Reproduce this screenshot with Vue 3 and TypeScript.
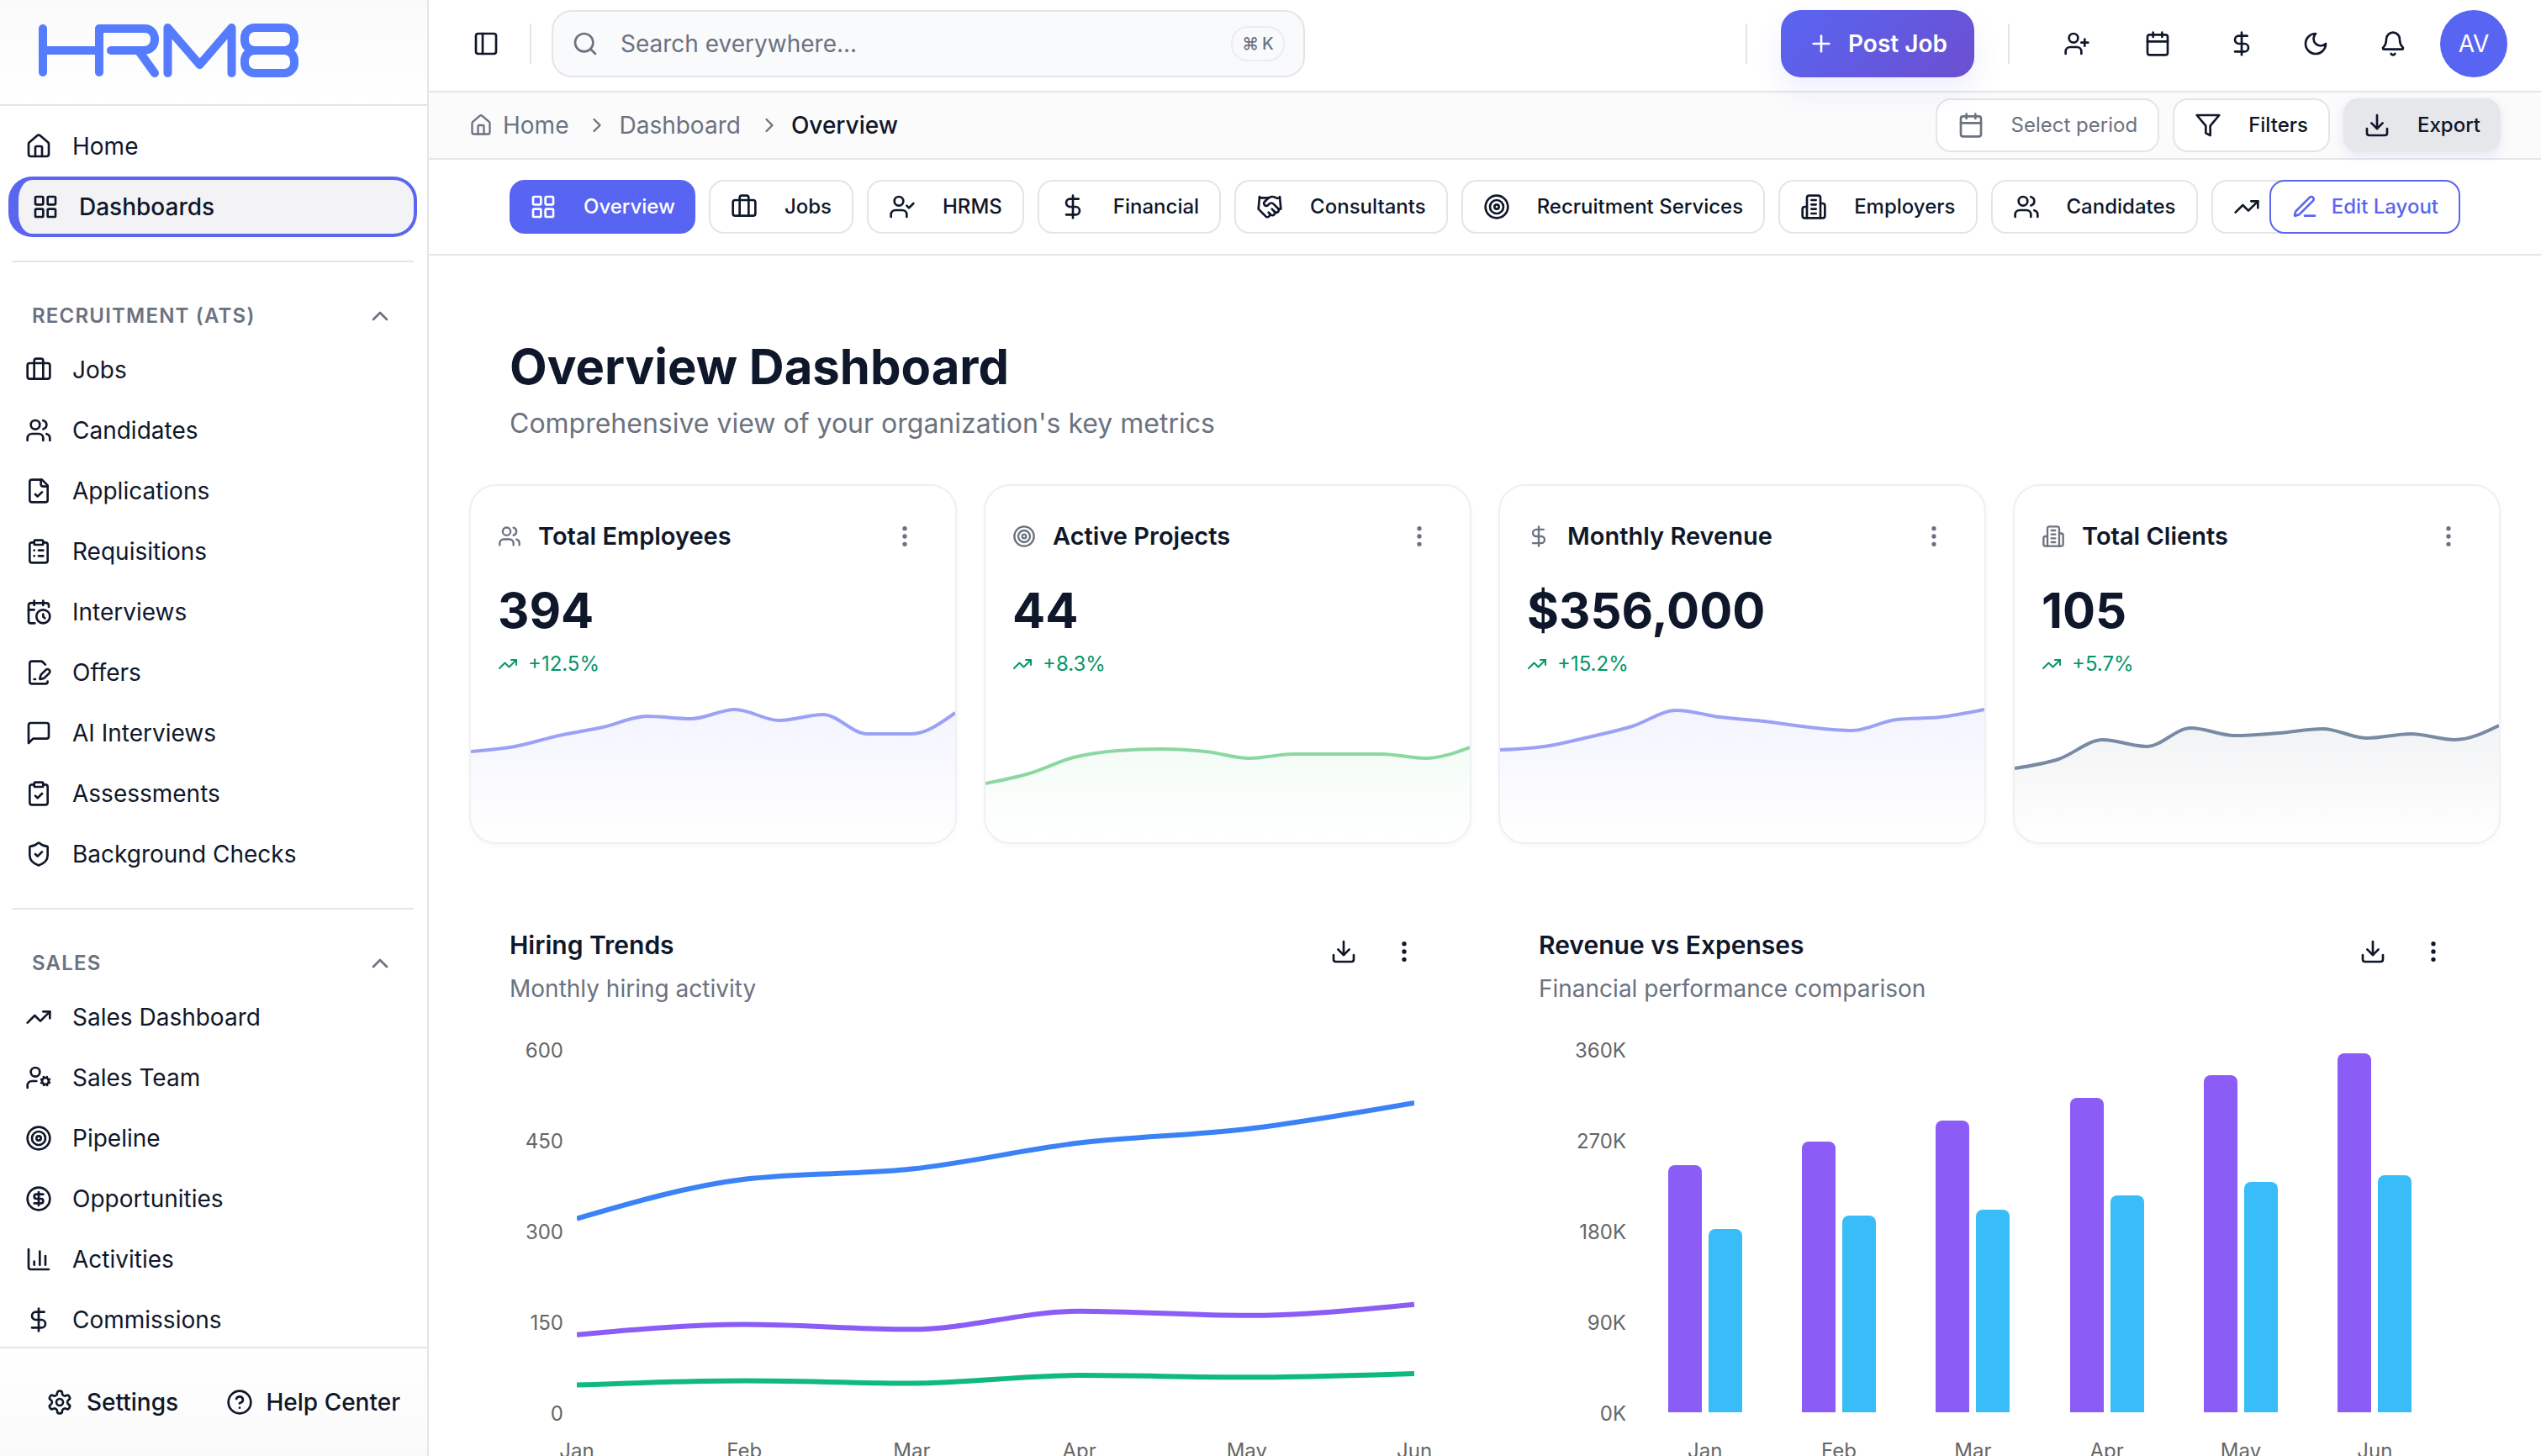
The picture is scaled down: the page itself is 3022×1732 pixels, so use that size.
<script setup lang="ts">
import { h, type FunctionalComponent } from 'vue'

const circle = (x: number, y: number, r: number): string =>
  `M${x - r} ${y}a${r} ${r} 0 1 0 ${2 * r} 0a${r} ${r} 0 1 0 ${-2 * r} 0z`
const box = (x: number, y: number, w: number, ht: number, r: number): string =>
  `M${x + r} ${y}h${w - 2 * r}a${r} ${r} 0 0 1 ${r} ${r}v${ht - 2 * r}a${r} ${r} 0 0 1 ${-r} ${r}h${-(w - 2 * r)}a${r} ${r} 0 0 1 ${-r} ${-r}v${-(ht - 2 * r)}a${r} ${r} 0 0 1 ${r} ${-r}z`

const userBody = ['M16 21v-2a4 4 0 0 0-4-4H6a4 4 0 0 0-4 4v2', circle(9, 7, 4)]
const clipboard = [
  box(8, 2, 8, 4, 1),
  'M16 4h2a2 2 0 0 1 2 2v14a2 2 0 0 1-2 2H6a2 2 0 0 1-2-2V6a2 2 0 0 1 2-2h2',
]

const icons: Record<string, string[]> = {
  home: [
    'M15 21v-8a1 1 0 0 0-1-1h-4a1 1 0 0 0-1 1v8',
    'M3 10a2 2 0 0 1 .709-1.528l7-5.999a2 2 0 0 1 2.582 0l7 5.999A2 2 0 0 1 21 10v9a2 2 0 0 1-2 2H5a2 2 0 0 1-2-2z',
  ],
  grid: [box(3, 3, 7, 7, 1), box(14, 3, 7, 7, 1), box(14, 14, 7, 7, 1), box(3, 14, 7, 7, 1)],
  briefcase: ['M16 20V4a2 2 0 0 0-2-2h-4a2 2 0 0 0-2 2v16', box(2, 6, 20, 14, 2)],
  users: [...userBody, 'M22 21v-2a4 4 0 0 0-3-3.87', 'M16 3.13a4 4 0 0 1 0 7.75'],
  userPlus: [...userBody, 'M19 8v6', 'M22 11h-6'],
  userCheck: [...userBody, 'm16 11 2 2 4-4'],
  fileCheck: [
    'M15 2H6a2 2 0 0 0-2 2v16a2 2 0 0 0 2 2h12a2 2 0 0 0 2-2V7Z',
    'M14 2v4a2 2 0 0 0 2 2h4',
    'm9 15 2 2 4-4',
  ],
  clipboardList: [...clipboard, 'M12 11h4', 'M12 16h4', 'M8 11h.01', 'M8 16h.01'],
  clipboardCheck: [...clipboard, 'm9 14 2 2 4-4'],
  calendarClock: [
    'M21 7.5V6a2 2 0 0 0-2-2H5a2 2 0 0 0-2 2v14a2 2 0 0 0 2 2h3.5',
    'M16 2v4', 'M8 2v4', 'M3 10h5', 'M17.5 17.5 16 16.3V14', circle(16, 16, 6),
  ],
  filePen: [
    'm18 5-2.414-2.414A2 2 0 0 0 14.172 2H6a2 2 0 0 0-2 2v16a2 2 0 0 0 2 2h12a2 2 0 0 0 2-2',
    'M21.378 12.626a1 1 0 0 0-3.004-3.004l-4.01 4.012a2 2 0 0 0-.506.854l-.837 2.87a.5.5 0 0 0 .62.62l2.87-.837a2 2 0 0 0 .854-.506z',
    'M8 18h1',
  ],
  message: ['M21 15a2 2 0 0 1-2 2H7l-4 4V5a2 2 0 0 1 2-2h14a2 2 0 0 1 2 2z'],
  shield: [
    'M20 13c0 5-3.5 7.5-7.66 8.95a1 1 0 0 1-.67-.01C7.5 20.5 4 18 4 13V6a1 1 0 0 1 1-1c2 0 4.5-1.2 6.24-2.72a1.17 1.17 0 0 1 1.52 0C14.51 3.81 17 5 19 5a1 1 0 0 1 1 1z',
    'm9 12 2 2 4-4',
  ],
  trend: ['M22 7 13.5 15.5 8.5 10.5 2 17', 'M16 7h6v6'],
  userCog: [
    circle(18, 15, 3), circle(9, 7, 4), 'M10 15H6a4 4 0 0 0-4 4v2',
    'm21.7 16.4-.9-.3', 'm15.2 13.9-.9-.3', 'm16.6 18.7.3-.9', 'm19.1 12.2.3-.9',
    'm19.6 18.7-.4-1', 'm16.8 12.3-.4-1', 'm14.3 16.6 1-.4', 'm20.7 13.8 1-.4',
  ],
  target: [circle(12, 12, 10), circle(12, 12, 6), circle(12, 12, 2)],
  coin: [circle(12, 12, 10), 'M16 8h-6a2 2 0 1 0 0 4h4a2 2 0 1 1 0 4H8', 'M12 18V6'],
  chart: ['M3 3v16a2 2 0 0 0 2 2h16', 'M18 17V9', 'M13 17V5', 'M8 17v-3'],
  dollar: ['M12 2v20', 'M17 5H9.5a3.5 3.5 0 0 0 0 7h5a3.5 3.5 0 0 1 0 7H6'],
  settings: [
    'M12.22 2h-.44a2 2 0 0 0-2 2v.18a2 2 0 0 1-1 1.73l-.43.25a2 2 0 0 1-2 0l-.15-.08a2 2 0 0 0-2.73.73l-.22.38a2 2 0 0 0 .73 2.73l.15.1a2 2 0 0 1 1 1.72v.51a2 2 0 0 1-1 1.74l-.15.09a2 2 0 0 0-.73 2.73l.22.38a2 2 0 0 0 2.73.73l.15-.08a2 2 0 0 1 2 0l.43.25a2 2 0 0 1 1 1.73V20a2 2 0 0 0 2 2h.44a2 2 0 0 0 2-2v-.18a2 2 0 0 1 1-1.73l.43-.25a2 2 0 0 1 2 0l.15.08a2 2 0 0 0 2.73-.73l.22-.39a2 2 0 0 0-.73-2.73l-.15-.08a2 2 0 0 1-1-1.74v-.5a2 2 0 0 1 1-1.74l.15-.09a2 2 0 0 0 .73-2.73l-.22-.38a2 2 0 0 0-2.73-.73l-.15.08a2 2 0 0 1-2 0l-.43-.25a2 2 0 0 1-1-1.73V4a2 2 0 0 0-2-2z',
    circle(12, 12, 3),
  ],
  help: [circle(12, 12, 10), 'M9.09 9a3 3 0 0 1 5.83 1c0 2-3 3-3 3', 'M12 17h.01'],
  panel: [box(3, 3, 18, 18, 2), 'M9 3v18'],
  search: [circle(11, 11, 8), 'm21 21-4.3-4.3'],
  plus: ['M5 12h14', 'M12 5v14'],
  calendar: ['M8 2v4', 'M16 2v4', box(3, 4, 18, 18, 2), 'M3 10h18'],
  moon: ['M12 3a6 6 0 0 0 9 9 9 9 0 1 1-9-9Z'],
  bell: [
    'M10.268 21a2 2 0 0 0 3.464 0',
    'M3.262 15.326A1 1 0 0 0 4 17h16a1 1 0 0 0 .74-1.673C19.41 13.956 18 12.499 18 8A6 6 0 0 0 6 8c0 4.499-1.411 5.956-2.738 7.326',
  ],
  filter: ['M22 3H2l8 9.46V19l4 2v-8.54L22 3z'],
  download: ['M21 15v4a2 2 0 0 1-2 2H5a2 2 0 0 1-2-2v-4', 'm7 10 5 5 5-5', 'M12 15V3'],
  handshake: [
    'm11 17 2 2a1 1 0 1 0 3-3',
    'm14 14 2.5 2.5a1 1 0 1 0 3-3l-3.88-3.88a3 3 0 0 0-4.24 0l-.88.88a1 1 0 1 1-3-3l2.81-2.81a5.79 5.79 0 0 1 7.06-.87l.47.28a2 2 0 0 0 1.42.25L21 4',
    'm21 3 1 11h-2', 'M3 3 2 14l6.5 6.5a1 1 0 1 0 3-3', 'M3 4h8',
  ],
  building: [
    'M6 22V4a2 2 0 0 1 2-2h8a2 2 0 0 1 2 2v18Z',
    'M6 12H4a2 2 0 0 0-2 2v6a2 2 0 0 0 2 2h2', 'M18 9h2a2 2 0 0 1 2 2v9a2 2 0 0 1-2 2h-2',
    'M10 6h4', 'M10 10h4', 'M10 14h4', 'M10 18h4',
  ],
  pen: [
    'M12 20h9',
    'M16.376 3.622a1 1 0 0 1 3.002 3.002L7.368 18.635a2 2 0 0 1-.855.506l-2.872.838a.5.5 0 0 1-.62-.62l.838-2.872a2 2 0 0 1 .506-.854z',
  ],
  chevronUp: ['m18 15-6-6-6 6'],
  chevronRight: ['m9 18 6-6-6-6'],
  more: [circle(12, 12, 1), circle(12, 5, 1), circle(12, 19, 1)],
}

const Icon: FunctionalComponent<{ name: string; size?: number }> = (props) =>
  h(
    'svg',
    {
      width: props.size ?? 32,
      height: props.size ?? 32,
      viewBox: '0 0 24 24',
      fill: 'none',
      stroke: 'currentColor',
      'stroke-width': 2,
      'stroke-linecap': 'round',
      'stroke-linejoin': 'round',
      'aria-hidden': 'true',
      class: 'icon',
    },
    icons[props.name].map((d) => h('path', { d })),
  )
Icon.props = ['name', 'size']

interface NavItem { label: string; icon: string }

const sections: { title: string; items: NavItem[] }[] = [
  {
    title: 'RECRUITMENT (ATS)',
    items: [
      { label: 'Jobs', icon: 'briefcase' },
      { label: 'Candidates', icon: 'users' },
      { label: 'Applications', icon: 'fileCheck' },
      { label: 'Requisitions', icon: 'clipboardList' },
      { label: 'Interviews', icon: 'calendarClock' },
      { label: 'Offers', icon: 'filePen' },
      { label: 'AI Interviews', icon: 'message' },
      { label: 'Assessments', icon: 'clipboardCheck' },
      { label: 'Background Checks', icon: 'shield' },
    ],
  },
  {
    title: 'SALES',
    items: [
      { label: 'Sales Dashboard', icon: 'trend' },
      { label: 'Sales Team', icon: 'userCog' },
      { label: 'Pipeline', icon: 'target' },
      { label: 'Opportunities', icon: 'coin' },
      { label: 'Activities', icon: 'chart' },
      { label: 'Commissions', icon: 'dollar' },
    ],
  },
]

const tabs: NavItem[] = [
  { label: 'Overview', icon: 'grid' },
  { label: 'Jobs', icon: 'briefcase' },
  { label: 'HRMS', icon: 'userCheck' },
  { label: 'Financial', icon: 'dollar' },
  { label: 'Consultants', icon: 'handshake' },
  { label: 'Recruitment Services', icon: 'target' },
  { label: 'Employers', icon: 'building' },
  { label: 'Candidates', icon: 'users' },
]

type Point = [number, number]

// Monotone cubic interpolation through evenly spaced points.
function smooth(p: Point[]): string {
  const n = p.length
  const slope = (i: number) => (p[i + 1][1] - p[i][1]) / (p[i + 1][0] - p[i][0])
  const t: number[] = new Array(n).fill(0)
  for (let i = 1; i < n - 1; i++) {
    const a = slope(i - 1)
    const b = slope(i)
    if (a * b > 0) t[i] = Math.sign(a) * 2 * Math.min(Math.abs(a), Math.abs(b), Math.abs(a + b) / 4)
  }
  t[0] = (3 * slope(0) - t[1]) / 2
  t[n - 1] = (3 * slope(n - 2) - t[n - 2]) / 2
  let d = `M${p[0][0]},${p[0][1]}`
  for (let i = 0; i < n - 1; i++) {
    const dx = (p[i + 1][0] - p[i][0]) / 3
    d += `C${p[i][0] + dx},${p[i][1] + dx * t[i]} ${p[i + 1][0] - dx},${p[i + 1][1] - dx * t[i + 1]} ${p[i + 1][0]},${p[i + 1][1]}`
  }
  return d
}

const spark = (v: number[]): string => smooth(v.map((y, i): Point => [(i * 576) / (v.length - 1), 180 - y]))

const stats = [
  { title: 'Total Employees', icon: 'users', value: '394', change: '+12.5%', color: '#5865f2', line: '#9ba1f5', fill: 0.07,
    d: spark([108, 114, 127, 137, 150, 147, 158, 145, 152, 129, 129, 154]) },
  { title: 'Active Projects', icon: 'target', value: '44', change: '+8.3%', color: '#22c55e', line: '#8ad8a0', fill: 0.05,
    d: spark([70, 82, 101, 109, 111, 108, 100, 105, 105, 105, 100, 113]) },
  { title: 'Monthly Revenue', icon: 'dollar', value: '$356,000', change: '+15.2%', color: '#5865f2', line: '#9ba1f5', fill: 0.07,
    d: spark([110, 114, 125, 138, 157, 149, 144, 137, 133, 146, 149, 158]) },
  { title: 'Total Clients', icon: 'building', value: '105', change: '+5.7%', color: '#475569', line: '#788aa4', fill: 0.07,
    d: spark([88, 99, 122, 114, 136, 127, 130, 135, 124, 129, 122, 139]) },
]

const months = ['Jan', 'Feb', 'Mar', 'Apr', 'May', 'Jun']

const hiring = [
  { color: '#3b82f6', values: [320, 385, 402, 445, 468, 511] },
  { color: '#8b5cf6', values: [128, 145, 137, 167, 160, 178] },
  { color: '#10b981', values: [45, 52, 48, 61, 58, 64] },
].map((s) => ({
  color: s.color,
  d: smooth(s.values.map((v, i): Point => [i * 200, 432 - (v / 600) * 432])),
}))

const finance = [
  [245, 182], [268, 195], [289, 201], [312, 215], [334, 228], [356, 235],
]
const share = (v: number): string => `${(v / 360) * 100}%`
</script>

<template>
  <div class="app">
    <aside class="sidebar">
      <div class="brand">
        <svg class="logo" width="312" height="68" viewBox="0 0 312 68" role="img" aria-label="HRM8">
          <g fill="none" stroke="#557cfc" stroke-width="10" stroke-linecap="round" stroke-linejoin="round">
            <path d="M7 8v52M7 34h67M74 60V8h54c8 0 12 6 12 13s-5 13-13 13H88M122 36l18 25" />
            <path d="M155.500 61V7l38 44 38-44v54" />
            <rect x="247" y="7" width="59" height="27" rx="12" />
            <rect x="247" y="34" width="59" height="27" rx="12" />
          </g>
        </svg>
      </div>
      <nav class="nav" aria-label="Main">
        <a class="nav-item" href="#"><Icon name="home" />Home</a>
        <a class="nav-item active" href="#" aria-current="page"><Icon name="grid" />Dashboards</a>
        <section v-for="s in sections" :key="s.title" class="nav-section">
          <button class="section-head" type="button">{{ s.title }}<Icon name="chevronUp" /></button>
          <a v-for="item in s.items" :key="item.label" class="nav-item" href="#">
            <Icon :name="item.icon" />{{ item.label }}
          </a>
        </section>
      </nav>
      <div class="side-foot">
        <a href="#"><Icon name="settings" />Settings</a>
        <a href="#"><Icon name="help" />Help Center</a>
      </div>
    </aside>

    <div class="page">
      <header class="topbar">
        <button class="icon-btn" type="button" aria-label="Toggle sidebar"><Icon name="panel" /></button>
        <span class="rule"></span>
        <label class="search">
          <Icon name="search" />
          <input type="search" placeholder="Search everywhere..." aria-label="Search everywhere" />
          <kbd><span>⌘</span><span>K</span></kbd>
        </label>
        <span class="rule push"></span>
        <button class="post" type="button"><Icon name="plus" />Post Job</button>
        <span class="rule"></span>
        <div class="tools">
          <button class="icon-btn" type="button" aria-label="Invite user"><Icon name="userPlus" /></button>
          <button class="icon-btn" type="button" aria-label="Calendar"><Icon name="calendar" /></button>
          <div class="tool-pair">
            <button class="icon-btn" type="button" aria-label="Currency"><Icon name="dollar" /></button>
            <button class="icon-btn" type="button" aria-label="Theme"><Icon name="moon" /></button>
          </div>
          <button class="icon-btn" type="button" aria-label="Notifications"><Icon name="bell" /></button>
          <button class="avatar" type="button">AV</button>
        </div>
      </header>

      <div class="crumbs">
        <nav class="trail" aria-label="Breadcrumb">
          <a href="#"><Icon name="home" :size="28" />Home</a>
          <Icon name="chevronRight" :size="28" />
          <a href="#">Dashboard</a>
          <Icon name="chevronRight" :size="28" />
          <span class="here">Overview</span>
        </nav>
        <div class="filters">
          <button class="btn muted" type="button"><Icon name="calendar" />Select period</button>
          <button class="btn" type="button"><Icon name="filter" />Filters</button>
          <button class="btn solid" type="button"><Icon name="download" />Export</button>
        </div>
      </div>

      <div class="tabbar">
        <div class="tabs">
          <button v-for="(t, i) in tabs" :key="t.label" class="btn" :class="{ current: i === 0 }" type="button">
            <Icon :name="t.icon" />{{ t.label }}
          </button>
          <button class="btn last" type="button" aria-label="Sales"><Icon name="trend" /></button>
        </div>
        <button class="btn edit" type="button"><Icon name="pen" />Edit Layout</button>
      </div>

      <main class="content">
        <div class="intro">
          <h1>Overview Dashboard</h1>
          <p>Comprehensive view of your organization's key metrics</p>
        </div>

        <div class="stats">
          <article v-for="(s, i) in stats" :key="s.title" class="stat">
            <div class="stat-body">
              <div class="stat-head">
                <Icon :name="s.icon" :size="28" />
                <h2>{{ s.title }}</h2>
                <button class="more" type="button" aria-label="More"><Icon name="more" /></button>
              </div>
              <div class="value">{{ s.value }}</div>
              <div class="change"><Icon name="trend" :size="24" />{{ s.change }}</div>
            </div>
            <svg class="spark" viewBox="0 0 576 180" preserveAspectRatio="none" aria-hidden="true">
              <defs>
                <linearGradient :id="'fade' + i" x1="0" y1="0" x2="0" y2="1">
                  <stop offset="0" :stop-color="s.color" :stop-opacity="s.fill" />
                  <stop offset="1" :stop-color="s.color" stop-opacity="0" />
                </linearGradient>
              </defs>
              <path :d="s.d + 'L576,180L0,180Z'" :fill="`url(#fade${i})`" />
              <path :d="s.d" fill="none" :stroke="s.line" stroke-width="4" vector-effect="non-scaling-stroke" />
            </svg>
          </article>
        </div>

        <div class="charts">
          <section class="chart">
            <div class="chart-head">
              <div>
                <h2>Hiring Trends</h2>
                <p>Monthly hiring activity</p>
              </div>
              <div class="chart-tools">
                <button type="button" aria-label="Download"><Icon name="download" /></button>
                <button type="button" aria-label="More"><Icon name="more" /></button>
              </div>
            </div>
            <div class="figure lines">
              <div class="axis">
                <span v-for="n in ['600', '450', '300', '150', '0']" :key="n">{{ n }}</span>
              </div>
              <div class="plot-wrap">
                <svg class="plot" viewBox="0 0 1000 432" preserveAspectRatio="none" aria-hidden="true">
                  <path v-for="l in hiring" :key="l.color" :d="l.d" fill="none" :stroke="l.color" stroke-width="6" vector-effect="non-scaling-stroke" />
                </svg>
                <div class="months wide"><span v-for="m in months" :key="m">{{ m }}</span></div>
              </div>
            </div>
          </section>

          <section class="chart">
            <div class="chart-head">
              <div>
                <h2>Revenue vs Expenses</h2>
                <p>Financial performance comparison</p>
              </div>
              <div class="chart-tools">
                <button type="button" aria-label="Download"><Icon name="download" /></button>
                <button type="button" aria-label="More"><Icon name="more" /></button>
              </div>
            </div>
            <div class="figure bars">
              <div class="axis">
                <span v-for="n in ['360K', '270K', '180K', '90K', '0K']" :key="n">{{ n }}</span>
              </div>
              <div class="plot-wrap">
                <div class="plot groups">
                  <div v-for="(g, i) in finance" :key="i" class="group">
                    <div class="bar revenue" :style="{ height: share(g[0]) }"></div>
                    <div class="bar expense" :style="{ height: share(g[1]) }"></div>
                  </div>
                </div>
                <div class="months"><span v-for="m in months" :key="m">{{ m }}</span></div>
              </div>
            </div>
          </section>
        </div>
      </main>
    </div>
  </div>
</template>

<style>
body {
  margin: 0;
  overflow: hidden;
}
.icon {
  flex: none;
}
</style>

<style scoped>
* {
  box-sizing: border-box;
}
.app {
  display: flex;
  height: 100vh;
  overflow: hidden;
  background: #fff;
  color: #0f172a;
  font-family: Inter, "Liberation Sans", sans-serif;
  font-size: 28px;
  line-height: 40px;
}
a {
  color: inherit;
  text-decoration: none;
}
button,
input {
  margin: 0;
  padding: 0;
  border: 0;
  background: none;
  color: inherit;
  font: inherit;
}
button {
  display: inline-flex;
  align-items: center;
  justify-content: center;
  white-space: nowrap;
}
h1,
h2,
p {
  margin: 0;
}

/* Sidebar */
.sidebar {
  display: flex;
  flex: none;
  flex-direction: column;
  width: 510px;
  border-right: 2px solid #e5e5e7;
}
.brand {
  flex: none;
  height: 126px;
  padding: 26px 44px;
  border-bottom: 2px solid #e5e5e7;
  background: linear-gradient(#fafafb, #fff);
}
.logo {
  display: block;
}
.nav {
  flex: 1;
  min-height: 0;
  padding: 12px 12px 0 10px;
  overflow: hidden;
}
.nav-item {
  display: flex;
  align-items: center;
  gap: 24px;
  height: 72px;
  padding: 0 20px;
}
.nav-item.active {
  padding: 0 16px;
  border: 4px solid #5b66ee;
  border-left-width: 12px;
  border-radius: 28px;
  background: #f3f3f6;
  font-weight: 500;
}
.nav-section {
  margin: 28px 0 0;
}
.nav-section::before {
  display: block;
  height: 2px;
  margin: 0 4px 36px;
  background: #e5e5e7;
  content: "";
}
.section-head {
  justify-content: space-between;
  width: 100%;
  height: 56px;
  padding: 0 28px;
  color: #6b7280;
  font-size: 24px;
  font-weight: 600;
  letter-spacing: 0.05em;
}
.side-foot {
  display: flex;
  flex: none;
  justify-content: space-between;
  align-items: center;
  height: 130px;
  padding: 0 32px 0 55px;
  border-top: 2px solid #e5e5e7;
  background: linear-gradient(#fff, #fafafb);
  font-weight: 500;
}
.side-foot a {
  display: flex;
  align-items: center;
  gap: 16px;
}

/* Page */
.page {
  display: flex;
  flex: 1;
  flex-direction: column;
  min-width: 0;
}
.topbar {
  position: relative;
  z-index: 1;
  display: flex;
  flex: none;
  align-items: center;
  height: 110px;
  padding: 0 40px 4px 28px;
  border-bottom: 2px solid #e5e5e7;
}
.icon-btn {
  width: 80px;
  height: 80px;
}
.rule {
  width: 2px;
  height: 48px;
  margin: 0 40px;
  background: #e5e5e7;
}
.icon-btn + .rule {
  margin: 0 24px 0 12px;
}
.rule.push {
  margin-left: auto;
}
.search {
  display: flex;
  flex: 0 1 896px;
  align-items: center;
  height: 80px;
  padding: 0 22px;
  border: 2px solid #e5e5e7;
  border-radius: 24px;
  background: #f9fafb;
  color: #6b7280;
}
.search input {
  flex: 1;
  min-width: 0;
  margin: 0 26px;
  outline: 0;
  appearance: none;
}
.search input::placeholder {
  color: #6b7280;
  opacity: 1;
}
kbd {
  display: flex;
  align-items: center;
  justify-content: center;
  gap: 4px;
  width: 64px;
  height: 42px;
  border: 2px solid #ededf0;
  border-radius: 20px;
  font-family: Inter, "DejaVu Sans", sans-serif;
  font-size: 20px;
  font-weight: 500;
}
.post {
  gap: 16px;
  height: 80px;
  padding: 0 32px;
  border-radius: 24px;
  background: linear-gradient(135deg, #5865f2, #6c4fd0);
  box-shadow: 0 16px 32px rgba(88, 101, 242, 0.1);
  color: #fff;
  font-weight: 600;
}
.tools,
.tool-pair {
  display: flex;
  align-items: center;
}
.tools {
  gap: 16px;
}
.tool-pair {
  gap: 8px;
  margin: 0 -4px 0 4px;
}
.avatar {
  width: 80px;
  height: 80px;
  border-radius: 50%;
  background: #5865f2;
  color: #fff;
}

.crumbs {
  display: flex;
  flex: none;
  align-items: center;
  justify-content: space-between;
  height: 80px;
  padding: 0 48px;
  border-bottom: 2px solid #e5e5e7;
  background: #fbfbfb;
}
.trail,
.filters {
  display: flex;
  align-items: center;
}
.trail {
  gap: 12px;
  color: #6b7280;
}
.trail a {
  display: flex;
  align-items: center;
  gap: 12px;
  padding-right: 8px;
}
.here {
  color: #0f172a;
  font-weight: 500;
}
.filters {
  gap: 16px;
}
.btn {
  flex: none;
  gap: 32px;
  height: 64px;
  padding: 0 24px;
  border: 2px solid #e5e5e7;
  border-radius: 18px;
  background: #fff;
  font-size: 24px;
  font-weight: 500;
}
.btn.muted {
  color: #6b7280;
  font-weight: 400;
}
.btn.solid,
.btn.current {
  padding: 0 24px;
  border-width: 0;
}
.btn.solid {
  background: #e5e7eb;
  box-shadow: 0 4px 12px rgba(88, 101, 242, 0.14);
}
.btn.current {
  background: #5865f2;
  color: #fff;
}
.btn.last {
  justify-content: flex-start;
  width: 160px;
}
.btn.edit {
  position: relative;
  gap: 16px;
  margin-left: -16px;
  border-color: #5b66ee;
  color: #5b66ee;
}
.tabbar {
  display: flex;
  flex: none;
  align-items: center;
  height: 114px;
  padding: 0 96px;
  border-bottom: 2px solid #e5e5e7;
}
.tabs {
  display: flex;
  flex: 1;
  gap: 16px;
  min-width: 0;
  overflow: hidden;
}

/* Dashboard */
.content {
  flex: 1;
  min-height: 0;
  padding: 96px 48px 0;
  overflow: hidden;
}
.intro {
  padding: 0 48px;
}
h1 {
  font-size: 58px;
  font-weight: 700;
  line-height: 72px;
}
.intro p {
  margin-top: 8px;
  color: #6b7280;
  font-size: 32px;
  line-height: 48px;
}
.stats {
  display: grid;
  grid-template-columns: repeat(4, minmax(0, 1fr));
  gap: 32px;
  margin-top: 48px;
}
.stat {
  display: flex;
  flex-direction: column;
  overflow: hidden;
  border: 2px solid #f0f0f3;
  border-radius: 32px;
  background: #fff;
  box-shadow: 0 2px 6px rgba(15, 23, 42, 0.03);
}
.stat-body {
  padding: 32px 32px 16px;
}
.stat-head {
  display: flex;
  align-items: center;
  gap: 20px;
  height: 56px;
  color: #6b7280;
}
.stat-head h2 {
  flex: 1;
  color: #0f172a;
  font-size: 29px;
  font-weight: 600;
}
.more {
  width: 56px;
  height: 56px;
}
.value {
  margin-top: 24px;
  font-size: 58px;
  font-weight: 700;
  line-height: 72px;
}
.change {
  display: flex;
  align-items: center;
  gap: 12px;
  margin-top: 12px;
  color: #059669;
  font-size: 24px;
  line-height: 32px;
}
.spark {
  display: block;
  width: 100%;
  height: 180px;
}

.charts {
  display: grid;
  grid-template-columns: repeat(2, minmax(0, 1fr));
  gap: 32px;
  margin-top: 100px;
}
.chart-head {
  display: flex;
  justify-content: space-between;
  padding: 0 48px;
}
.chart-head h2 {
  font-size: 30px;
  font-weight: 600;
}
.chart-head p {
  margin-top: 12px;
  color: #6b7280;
}
.chart-tools {
  display: flex;
  gap: 8px;
}
.chart-tools button {
  width: 64px;
  height: 56px;
}
.figure {
  display: grid;
  margin-top: 40px;
  color: #666;
  font-size: 24px;
  line-height: 24px;
}
.figure.lines {
  grid-template-columns: 112px minmax(0, 1fr);
  column-gap: 16px;
  padding-right: 68px;
}
.figure.bars {
  grid-template-columns: 152px minmax(0, 1fr);
  column-gap: 14px;
  padding-right: 70px;
}
.axis {
  display: flex;
  flex-direction: column;
  justify-content: space-between;
  height: 458px;
  padding-top: 2px;
  text-align: right;
}
.plot-wrap {
  min-width: 0;
  padding-top: 12px;
}
.plot {
  display: block;
  width: 100%;
  height: 432px;
}
.groups {
  display: flex;
}
.group {
  display: flex;
  flex: 1;
  align-items: flex-end;
  justify-content: center;
  gap: 8px;
}
.bar {
  width: 40px;
  border-radius: 8px 8px 0 0;
}
.revenue {
  background: #8b5cf6;
}
.expense {
  background: #38bdf8;
}
.months {
  display: flex;
  margin-top: 34px;
}
.months.wide {
  margin-right: -10%;
  margin-left: -10%;
}
.months span {
  flex: 1;
  text-align: center;
}
</style>
